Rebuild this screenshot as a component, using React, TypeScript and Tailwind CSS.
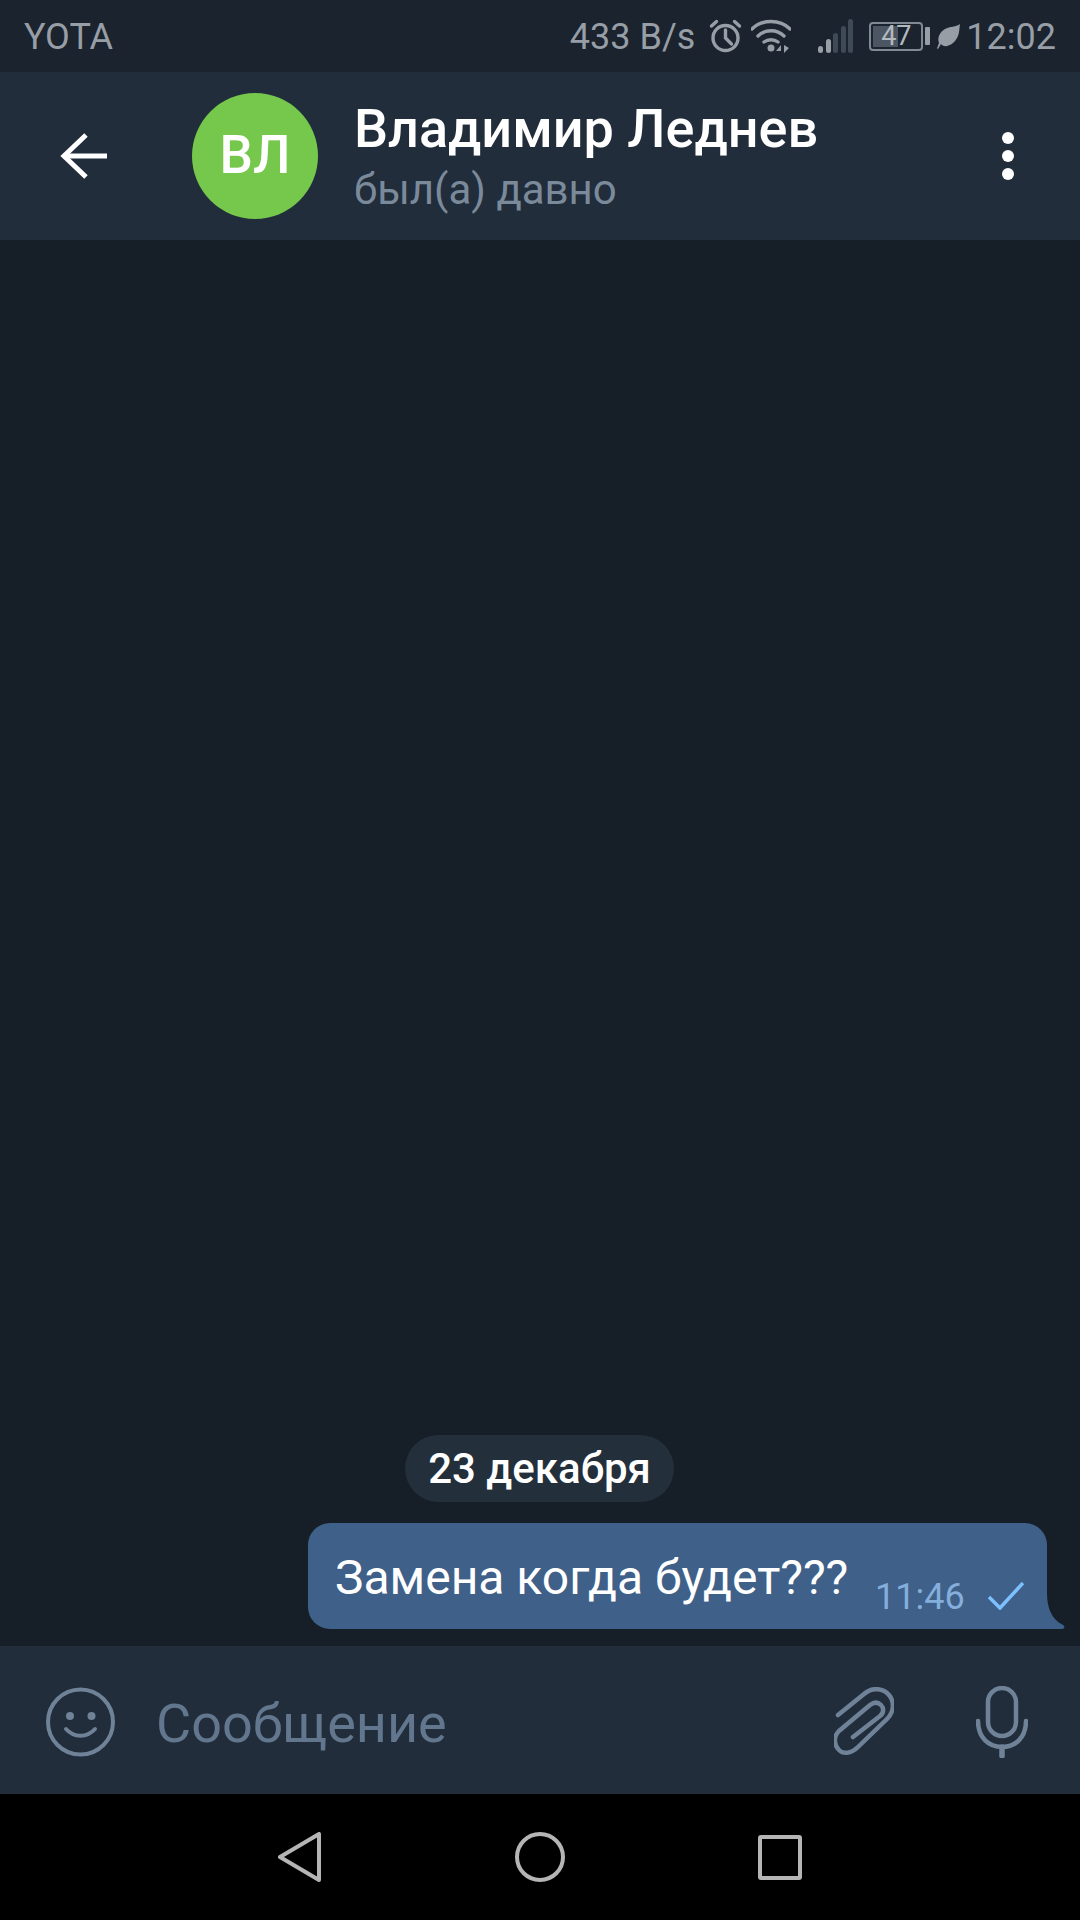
export default function App() {
  const font = { fontFamily: "Roboto, 'Noto Sans', sans-serif" };
  return (
    <div style={font} className="w-[1080px] h-[1920px] flex flex-col overflow-hidden bg-[#161f28]">
      {/* status bar */}
      <div className="h-[72px] shrink-0 bg-[#1a232e] flex items-center pl-[24px] pr-[24px] text-[#979ea6] text-[36px]">
        <span className="leading-none mt-[2px]">YOTA</span>
        <div className="ml-auto flex items-center">
          <span className="leading-none mt-[2px]">433 B/s</span>
          <svg className="ml-[14px]" width="33" height="34" viewBox="0 0 32 34" fill="none" stroke="#979ea6" strokeWidth="3.400" strokeLinecap="round">
            <circle cx="16" cy="19" r="12.500" />
            <path d="M16 11v8l6 6" />
            <path d="M2 7l5-4.500M30 7l-5-4.500" />
          </svg>
          <svg className="ml-[9px]" width="40" height="34" viewBox="0 0 40 34" fill="none" stroke="#979ea6" strokeWidth="3.400" strokeLinecap="round">
            <path d="M1 10C11 0 29 0 39 10" />
            <path d="M7 17C14 10 26 10 33 17" />
            <path d="M13 23C17 20 23 20 27 23" />
            <circle cx="20" cy="29" r="3.500" fill="#979ea6" stroke="none" />
            <path d="M25 32l5-6v6zM33 26v8l5-5z" fill="#979ea6" stroke="none" />
          </svg>
          <svg className="ml-[27px]" width="35" height="34" viewBox="0 0 35 34">
            <rect x="0" y="27" width="5" height="7" rx="2.500" fill="#979ea6" />
            <rect x="8" y="20" width="5" height="14" rx="2.500" fill="#979ea6" />
            <rect x="15" y="14" width="5" height="20" rx="2.500" fill="#3f4a56" />
            <rect x="23" y="7" width="5" height="27" rx="2.500" fill="#3f4a56" />
            <rect x="30" y="0" width="5" height="34" rx="2.500" fill="#3f4a56" />
          </svg>
          <div className="ml-[16px] relative w-[54px] h-[29px] rounded-[4px] border-[2px] border-[#808a94] flex items-center justify-center">
            <div className="absolute left-[2px] top-[2px] bottom-[2px] w-[25px] bg-[#4c5662]" />
            <span className="relative text-[27px] leading-[25px] text-[#b4b9be]">47</span>
          </div>
          <div className="ml-[2px] w-[5px] h-[18px] rounded-[1px] bg-[#979ea6]" />
          <svg className="ml-[7px]" width="23" height="25" viewBox="0 0 23 25">
            <path d="M23 0C22 6 23 13 16 19C11 23 6 23 4 20L1 25C0 25 0 24 0.500 23L2 19C0 13 3 8 8 5C13 2.500 19 3 23 0Z" fill="#979ea6" />
          </svg>
          <span className="ml-[6px] leading-none mt-[2px]">12:02</span>
        </div>
      </div>

      {/* header */}
      <div className="h-[168px] shrink-0 bg-[#212d3b] flex items-center">
        <svg className="ml-[60px]" width="47" height="46" viewBox="0 0 47 46" fill="none" stroke="#ffffff" strokeWidth="5">
          <path d="M47 23H3" />
          <path d="M26 2L4 23l22 21" />
        </svg>
        <div className="ml-[85px] w-[126px] h-[126px] rounded-full bg-[#76c84d] flex items-center justify-center text-white text-[53px] font-medium">
          ВЛ
        </div>
        <div className="ml-[36px] flex flex-col">
          <span className="text-white text-[54px] font-medium leading-[60px]">Владимир Леднев</span>
          <span className="text-[#7b8a9b] text-[42px] leading-[48px] mt-[7px]">был(а) давно</span>
        </div>
        <div className="ml-auto mr-[66px] flex flex-col gap-[6px]">
          <div className="w-[12px] h-[12px] rounded-full bg-white" />
          <div className="w-[12px] h-[12px] rounded-full bg-white" />
          <div className="w-[12px] h-[12px] rounded-full bg-white" />
        </div>
      </div>

      {/* messages */}
      <div className="flex-1 flex flex-col justify-end pb-[17px]">
        <div className="self-center ml-[-1px] h-[67px] w-[269px] rounded-[34px] bg-[#242f3c] flex items-center justify-center text-white text-[42px] font-medium">
          23 декабря
        </div>
        <div className="relative mt-[21px] ml-[308px] w-[739px] h-[106px] rounded-[22px] rounded-br-none bg-[#3f6088] flex items-center pl-[27px]">
          <span className="text-white text-[48px] leading-none mt-[3px]">Замена когда будет???</span>
          <span className="absolute left-[567px] top-[53px] text-[#84aedb] text-[36px] leading-[42px]">11:46</span>
          <svg className="absolute left-[680px] top-[59px]" width="36" height="28" viewBox="0 0 36 28" fill="none" stroke="#7cc0ff" strokeWidth="3.500">
            <path d="M1 15l11 11L35 1" />
          </svg>
          <svg className="absolute left-[739px] bottom-0" width="18" height="36" viewBox="0 0 18 36">
            <path d="M0 0C0 14 4 26 16 32C18 33 18 36 15 36H0Z" fill="#3f6088" />
          </svg>
        </div>
      </div>

      {/* composer */}
      <div className="h-[148px] shrink-0 bg-[#212d3b] flex items-center">
        <svg className="ml-[46px] mt-[3px]" width="69" height="70" viewBox="0 0 69 70" fill="none" stroke="#6f8297" strokeWidth="4">
          <circle cx="34.500" cy="35" r="32.500" />
          <path d="M20 42c8 9 21 9 29 0" strokeLinecap="round" />
          <circle cx="24" cy="29" r="4" fill="#6f8297" stroke="none" />
          <circle cx="45.500" cy="29" r="4" fill="#6f8297" stroke="none" />
        </svg>
        <span className="ml-[41px] text-[#62778e] text-[54px] leading-none mt-[8px]">Сообщение</span>
        <svg className="ml-auto mt-[3px]" width="60" height="70" viewBox="0 0 60 70" fill="none" stroke="#6f8297" strokeWidth="4.500" strokeLinecap="round">
          <path d="M4 28L30 7c9-8 20-5 25 1s6 16-2 24L24 60c-6 6-14 8-19 3S-1 50 5 44L36 18c4-3 8-3 11 0s3 8-1 11L19 50" />
        </svg>
        <svg className="ml-[82px] mr-[52px] mt-[3px]" width="52" height="72" viewBox="0 0 52 72" fill="none" stroke="#6f8297" strokeWidth="4.500" strokeLinecap="round">
          <rect x="12" y="2" width="28" height="48" rx="14" />
          <path d="M2 35c0 17 11 26 24 26s24-9 24-26" />
          <path d="M26 61v9" strokeWidth="5.500" />
        </svg>
      </div>

      {/* nav bar */}
      <div className="h-[126px] shrink-0 bg-black flex items-center">
        <svg className="ml-[278px]" width="43" height="50" viewBox="0 0 43 50" fill="none" stroke="#b5b5b5" strokeWidth="4" strokeLinejoin="round">
          <path d="M41 2v46L2 25z" />
        </svg>
        <div className="ml-[194px] w-[50px] h-[50px] rounded-full border-[4px] border-[#b5b5b5]" />
        <div className="ml-[193px] w-[44px] h-[45px] rounded-[3px] border-[4px] border-[#b5b5b5]" />
      </div>
    </div>
  );
}
